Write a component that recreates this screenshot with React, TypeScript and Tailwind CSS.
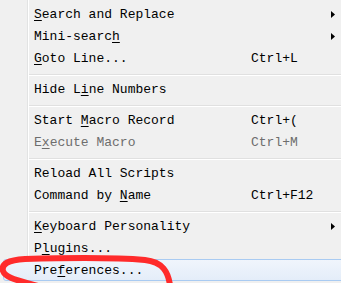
import React from "react";

type Item =
  | { kind: "sep" }
  | {
      kind: "item";
      pre: string;
      u: string;
      post: string;
      sc?: string;
      arrow?: boolean;
      disabled?: boolean;
      hl?: boolean;
    };

const items: Item[] = [
  { kind: "item", pre: "", u: "S", post: "earch and Replace", arrow: true },
  { kind: "item", pre: "Mini-searc", u: "h", post: "", arrow: true },
  { kind: "item", pre: "", u: "G", post: "oto Line...", sc: "Ctrl+L" },
  { kind: "sep" },
  { kind: "item", pre: "Hide L", u: "i", post: "ne Numbers" },
  { kind: "sep" },
  { kind: "item", pre: "Start ", u: "M", post: "acro Record", sc: "Ctrl+(" },
  { kind: "item", pre: "E", u: "x", post: "ecute Macro", sc: "Ctrl+M", disabled: true },
  { kind: "sep" },
  { kind: "item", pre: "Reload All Scripts", u: "", post: "" },
  { kind: "item", pre: "Command by ", u: "N", post: "ame", sc: "Ctrl+F12" },
  { kind: "sep" },
  { kind: "item", pre: "", u: "K", post: "eyboard Personality", arrow: true },
  { kind: "item", pre: "P", u: "l", post: "ugins..." },
  { kind: "item", pre: "Pre", u: "f", post: "erences...", hl: true },
];

function Row({ it }: { it: Extract<Item, { kind: "item" }> }) {
  const color = it.disabled ? "text-[#6d6d6d]" : "text-black";
  const box = it.hl
    ? "ml-[3px] pl-[30px] rounded-[3px] border border-[#a9cbf2] bg-gradient-to-b from-[#f0f5fc] to-[#e4edf9]"
    : "pl-[34px] border border-transparent border-l-0";
  return (
    <div className={`flex h-[22px] items-center ${box} ${color}`}>
      <span className="w-[217px] shrink-0 whitespace-pre">
        {it.pre}
        {it.u && <span className="underline underline-offset-[2px]">{it.u}</span>}
        {it.post}
      </span>
      <span className="w-[80px] shrink-0 whitespace-pre">{it.sc ?? ""}</span>
      {it.arrow && (
        <svg width="4" height="7" viewBox="0 0 4 7">
          <path d="M0 0 L4 3.5 L0 7 Z" fill="#000" />
        </svg>
      )}
    </div>
  );
}

export default function App() {
  return (
    <div
      className="relative h-[283px] w-[341px] overflow-hidden bg-[linear-gradient(to_right,#f0f0f0_27px,#e2e3e3_27px,#e2e3e3_28px,#ffffff_28px,#ffffff_29px,#f0f0f0_29px)]"
      style={{ fontFamily: '"Liberation Mono", monospace' }}
    >
      <div className="flex w-[360px] flex-col pt-[3px] text-[13px] leading-[15px]">
        {items.map((it, i) =>
          it.kind === "sep" ? (
            <div key={i} className="h-[9px] pl-[29px] pt-[5px]">
              <div className="h-px bg-[#e0e0e0]" />
              <div className="h-px bg-white" />
            </div>
          ) : (
            <Row key={i} it={it} />
          )
        )}
      </div>
      <svg className="absolute left-0 top-0" width="341" height="283" viewBox="0 0 341 283">
        <path
          d="M170 285 C168 272 163 262 145 260 C110 257 60 258 25 259 C8 260 1 264 3 271 C6 279 22 281 38 286"
          fill="none"
          stroke="#ff2b2b"
          strokeWidth="6"
          strokeLinecap="round"
        />
      </svg>
    </div>
  );
}
